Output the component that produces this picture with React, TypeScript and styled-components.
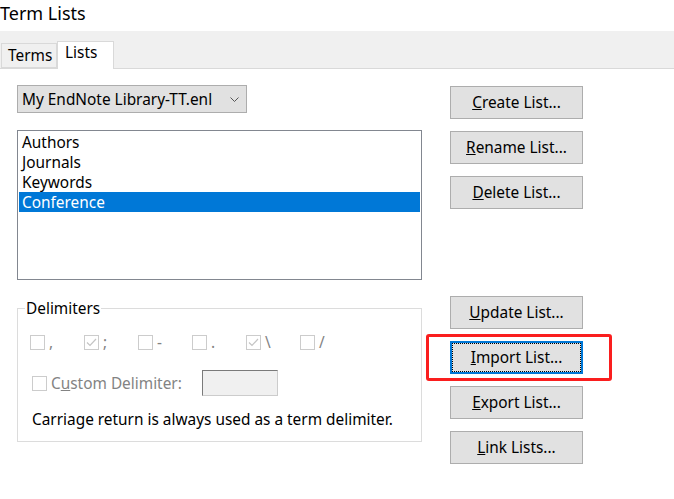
import React, { FC } from "react";
import styled, { createGlobalStyle } from "styled-components";

const GlobalStyle = createGlobalStyle`
  html, body {
    margin: 0;
    padding: 0;
    background: #ffffff;
  }
`;

const Page = styled.div`
  position: relative;
  width: 674px;
  height: 499px;
  overflow: hidden;
  background: #ffffff;
  color: #000000;
  font-family: "Noto Sans", "Liberation Sans", sans-serif;
  font-size: 15.4px;
`;

const Title = styled.h1`
  margin: 0;
  height: 31px;
  font-size: 18px;
  font-weight: 400;
  line-height: 26px;
`;

const TabStrip = styled.div`
  display: flex;
  align-items: flex-end;
  height: 37px;
  padding-left: 1px;
  background: #f0f0f0;
  border-bottom: 1px solid #d9d9d9;
`;

const Tab = styled.div<{ $active?: boolean }>`
  box-sizing: border-box;
  width: ${(p) => (p.$active ? "57px" : "56px")};
  height: ${(p) => (p.$active ? "28px" : "25px")};
  margin-bottom: ${(p) => (p.$active ? "-1px" : "0")};
  padding: ${(p) => (p.$active ? "1px 0 0 7px" : "2px 0 0 6px")};
  background: ${(p) => (p.$active ? "#ffffff" : "#f0f0f0")};
  border: 1px solid #d9d9d9;
  border-bottom: ${(p) => (p.$active ? "none" : "1px solid #d9d9d9")};
  line-height: 20px;
`;

const Body = styled.div`
  display: flex;
  padding: 16px 0 0 17px;
`;

const LeftColumn = styled.div`
  display: flex;
  flex-direction: column;
  width: 405px;
`;

const RightColumn = styled.div`
  display: flex;
  flex-direction: column;
  margin-left: 28px;
  padding-top: 1px;
`;

const ButtonGroup = styled.div<{ $gapBefore?: number }>`
  display: flex;
  flex-direction: column;
  gap: 12px;
  margin-top: ${(p) => p.$gapBefore ?? 0}px;
`;

const Select = styled.div`
  box-sizing: border-box;
  display: flex;
  align-items: center;
  justify-content: space-between;
  width: 230px;
  height: 28px;
  padding: 0 7px 0 4px;
  background: #e1e1e1;
  border: 1px solid #adadad;
`;

const ListBox = styled.ul`
  box-sizing: border-box;
  width: 405px;
  height: 150px;
  margin: 17px 0 0;
  padding: 1px;
  list-style: none;
  border: 1px solid #828790;
  background: #ffffff;
`;

const ListItem = styled.li<{ $selected?: boolean }>`
  height: 20px;
  padding-left: 3px;
  line-height: 21px;
  background: ${(p) => (p.$selected ? "#0078d7" : "transparent")};
  color: ${(p) => (p.$selected ? "#ffffff" : "#000000")};
`;

const GroupBox = styled.fieldset`
  box-sizing: border-box;
  width: 405px;
  height: 143px;
  min-width: 0;
  margin: 19px 0 0;
  padding: 14px 0 0 7px;
  border: 1px solid #dcdcdc;
`;

const Legend = styled.legend`
  padding: 0 1px;
  margin: 0;
  line-height: 19px;
`;

const GroupContent = styled.div`
  padding-left: 5px;
`;

const CheckRow = styled.div`
  display: flex;
`;

const CheckItem = styled.label`
  display: flex;
  align-items: center;
  width: 54px;
  height: 20px;
  color: #838383;
`;

const Box = styled.span`
  box-sizing: border-box;
  display: inline-flex;
  align-items: center;
  justify-content: center;
  width: 15px;
  height: 15px;
  margin-right: 4px;
  border: 1px solid #cccccc;
  background: #ffffff;
`;

const CustomRow = styled.div`
  display: flex;
  align-items: center;
  margin-top: 18px;
  padding-left: 2px;
  color: #838383;
`;

const CustomInput = styled.div`
  box-sizing: border-box;
  width: 76px;
  height: 26px;
  margin-left: 20px;
  background: #f0f0f0;
  border: 1px solid #cccccc;
  border-top-color: #7a7a7a;
  border-left-color: #7a7a7a;
`;

const Note = styled.p`
  margin: 14px 0 0 2px;
  line-height: 20px;
`;

const Button = styled.button<{ $focused?: boolean }>`
  box-sizing: border-box;
  width: 133px;
  height: 33px;
  padding: 0;
  background: #e1e1e1;
  border: 1px solid ${(p) => (p.$focused ? "#0078d7" : "#adadad")};
  font-family: inherit;
  font-size: 15.4px;
  color: #000000;
  outline: ${(p) => (p.$focused ? "1px dotted #000000" : "none")};
  outline-offset: -3px;
  ${(p) => p.$focused && "box-shadow: inset 0 0 0 1px #0078d7;"}
`;

const Key = styled.span`
  text-decoration: underline;
`;

const Highlight = styled.div`
  position: absolute;
  left: 426px;
  top: 334px;
  width: 186px;
  height: 47px;
  box-sizing: border-box;
  border: 3px solid #fa1e1e;
  border-radius: 3px;
  pointer-events: none;
`;

const Chevron: FC = () => (
  <svg width="9" height="5" viewBox="0 0 9 5">
    <polyline points="0.5,0.5 4.5,4.5 8.5,0.5" fill="none" stroke="#555" strokeWidth="1" />
  </svg>
);

const Tick: FC = () => (
  <svg width="11" height="9" viewBox="0 0 11 9">
    <polyline points="1,4.5 4,7.5 10,1" fill="none" stroke="#c4c4c4" strokeWidth="1.2" />
  </svg>
);

const delimiters = [
  { label: ",", checked: false },
  { label: ";", checked: true },
  { label: "-", checked: false },
  { label: ".", checked: false },
  { label: "\\", checked: true },
  { label: "/", checked: false },
];

const App: FC = () => {
  return (
    <Page>
      <GlobalStyle />
      <Title>Term Lists</Title>
      <TabStrip>
        <Tab>Terms</Tab>
        <Tab $active>Lists</Tab>
      </TabStrip>
      <Body>
        <LeftColumn>
          <Select>
            <span>My EndNote Library-TT.enl</span>
            <Chevron />
          </Select>
          <ListBox>
            <ListItem>Authors</ListItem>
            <ListItem>Journals</ListItem>
            <ListItem>Keywords</ListItem>
            <ListItem $selected>Conference</ListItem>
          </ListBox>
          <GroupBox>
            <Legend>Delimiters</Legend>
            <GroupContent>
              <CheckRow>
                {delimiters.map((d) => (
                  <CheckItem key={d.label}>
                    <Box>{d.checked && <Tick />}</Box>
                    {d.label}
                  </CheckItem>
                ))}
              </CheckRow>
              <CustomRow>
                <Box />
                C<Key>u</Key>stom Delimiter:
                <CustomInput />
              </CustomRow>
              <Note>Carriage return is always used as a term delimiter.</Note>
            </GroupContent>
          </GroupBox>
        </LeftColumn>
        <RightColumn>
          <ButtonGroup>
            <Button><Key>C</Key>reate List...</Button>
            <Button><Key>R</Key>ename List...</Button>
            <Button><Key>D</Key>elete List...</Button>
          </ButtonGroup>
          <ButtonGroup $gapBefore={87}>
            <Button><Key>U</Key>pdate List...</Button>
            <Button $focused><Key>I</Key>mport List...</Button>
            <Button><Key>E</Key>xport List...</Button>
            <Button><Key>L</Key>ink Lists...</Button>
          </ButtonGroup>
        </RightColumn>
      </Body>
      <Highlight />
    </Page>
  );
};

export default App;
